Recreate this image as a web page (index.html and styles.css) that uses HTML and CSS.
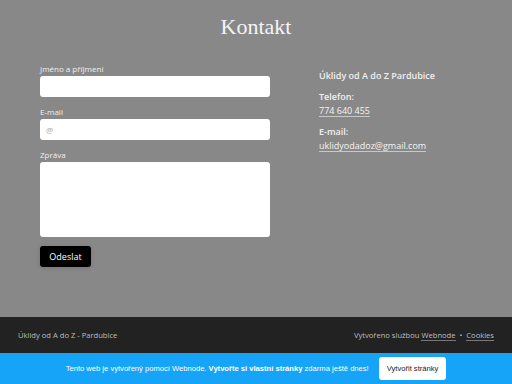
FILE: index.html
```html
<!DOCTYPE html>
<html lang="cs">
<head>
    <meta charset="UTF-8">
    <meta name="viewport" content="width=device-width, initial-scale=1.0">
    <title>Kontakt</title>
    <link rel="stylesheet" href="styles.css">
</head>
<body>
    <main class="contact">
        <h1>Kontakt</h1>
        <div class="columns">
            <form class="contact-form">
                <label class="field-label" for="name">Jméno a příjmení</label>
                <input class="field" type="text" id="name">
                <label class="field-label" for="email">E-mail</label>
                <input class="field" type="email" id="email" placeholder="@">
                <label class="field-label" for="message">Zpráva</label>
                <textarea class="field field-area" id="message"></textarea>
                <button class="send-btn" type="button">Odeslat</button>
            </form>
            <div class="info">
                <p class="info-title">Úklidy od A do Z Pardubice</p>
                <p class="info-label">Telefon:</p>
                <a class="info-link" href="#">774 640 455</a>
                <p class="info-label">E-mail:</p>
                <a class="info-link" href="#">uklidyodadoz@gmail.com</a>
            </div>
        </div>
    </main>

    <footer class="footer">
        <span>Úklidy od A do Z - Pardubice</span>
        <span>Vytvořeno službou <a href="#">Webnode</a> &nbsp;&bull;&nbsp; <a href="#">Cookies</a></span>
    </footer>

    <div class="promo">
        <span>Tento web je vytvořený pomocí Webnode. <strong>Vytvořte si vlastní stránky</strong> zdarma ještě dnes!</span>
        <a class="promo-btn" href="#">Vytvořit stránky</a>
    </div>
</body>
</html>
```

FILE: styles.css
```css
body {
    margin: 0;
    font-family: "Open Sans", Arial, sans-serif;
    background-color: #888888;
    color: #ffffff;
}
.contact {
    height: 317px;
    box-sizing: border-box;
    padding: 14px 40px 0;
}
h1 {
    margin: 0 0 24px;
    font-family: "Liberation Serif", "Times New Roman", serif;
    font-weight: normal;
    font-size: 22px;
    line-height: 26px;
    text-align: center;
    color: #f4f4f4;
}
.columns {
    display: flex;
}
.contact-form {
    display: flex;
    flex-direction: column;
    align-items: flex-start;
    width: 230px;
}
.field-label {
    font-size: 8px;
    line-height: 10px;
    margin-bottom: 2px;
    color: #f0f0f0;
}
.field {
    width: 100%;
    height: 21px;
    box-sizing: border-box;
    border: none;
    border-radius: 3px;
    background: #ffffff;
    margin-bottom: 10px;
    padding: 0 6px;
    font-size: 8px;
    font-family: inherit;
}
.field::placeholder {
    color: #aaaaaa;
}
.field-area {
    height: 75px;
    resize: none;
    margin-bottom: 9px;
}
.send-btn {
    width: 51px;
    height: 21px;
    border: none;
    border-radius: 3px;
    background: #000000;
    color: #ffffff;
    font-family: inherit;
    font-size: 9px;
    font-weight: normal;
    padding: 0;
    box-shadow: 0 1px 4px rgba(0, 0, 0, 0.15);
}
.info {
    margin-left: 49px;
    padding-top: 6px;
    font-size: 9px;
    color: #f0f0f0;
}
.info p {
    margin: 0;
}
.info-title {
    font-weight: 600;
    line-height: 12px;
    margin-bottom: 9px !important;
}
.info-label {
    font-weight: 600;
    line-height: 12px;
    margin-bottom: 1px !important;
}
.info-link {
    display: inline-block;
    color: #f4f4f4;
    text-decoration: none;
    border-bottom: 1px solid #c8c8c8;
    line-height: 11px;
    margin-bottom: 9px;
}
.footer {
    height: 36px;
    background-color: #222222;
    display: flex;
    justify-content: space-between;
    align-items: center;
    padding: 0 18px;
    font-size: 7.6px;
    color: #bdbdbd;
}
.footer a {
    color: #bdbdbd;
    text-decoration: none;
    border-bottom: 1px solid #777777;
}
.promo {
    height: 31px;
    background-color: #15a4f7;
    display: flex;
    justify-content: center;
    align-items: center;
    gap: 10px;
    font-family: "Liberation Sans", Arial, sans-serif;
    font-size: 7.6px;
}
.promo-btn {
    background: #ffffff;
    color: #222222;
    text-decoration: none;
    border-radius: 3px;
    padding: 7px 8px;
    font-size: 7.6px;
}
```
